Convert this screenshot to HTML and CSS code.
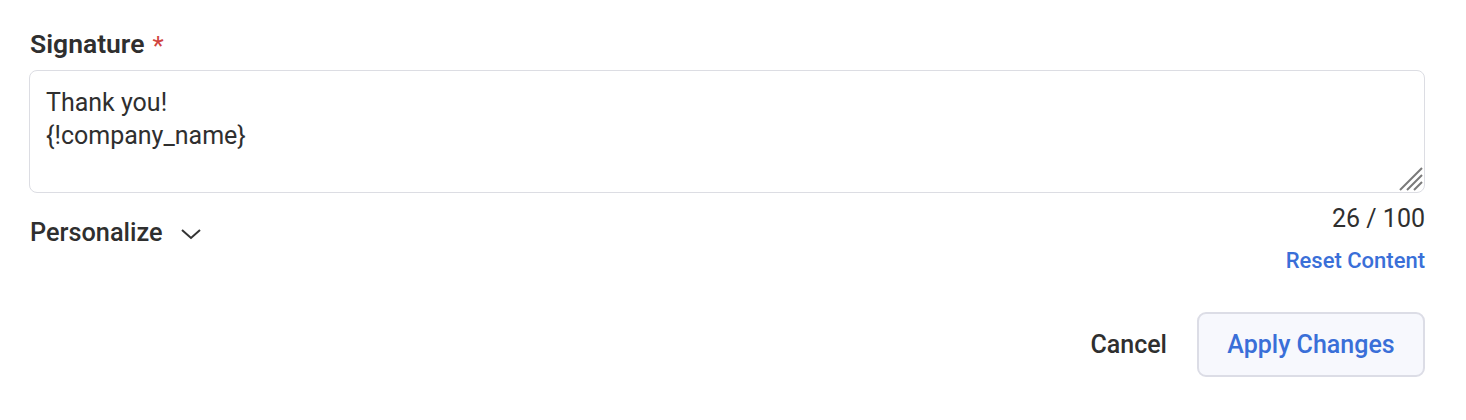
FILE: index.html
```html
<!DOCTYPE html>
<html>
<head>
<meta charset="utf-8">
<link rel="stylesheet" href="styles.css">
</head>
<body>
<div class="form">
  <div class="label">Signature <span class="req">*</span></div>
  <div class="textarea-wrap">
    <div class="textarea">Thank you!<br>{!company_name}</div>
    <svg class="grip" width="26" height="26" viewBox="0 0 26 26">
      <path d="M25 3 L3 25 M25 10 L10 25 M25 17 L17 25" stroke="#7a7a7a" stroke-width="2" fill="none"/>
    </svg>
  </div>
  <div class="below">
    <div class="personalize">
      <span>Personalize</span>
      <svg class="chev" width="22" height="14" viewBox="0 0 22 14">
        <path d="M2 3 L11 11 L20 3" stroke="#333" stroke-width="2" fill="none"/>
      </svg>
    </div>
    <div class="meta">
      <div class="count">26 / 100</div>
      <a class="reset">Reset Content</a>
    </div>
  </div>
  <div class="actions">
    <button class="cancel">Cancel</button>
    <button class="apply">Apply Changes</button>
  </div>
</div>
</body>
</html>
```
FILE: styles.css
```css
html, body { margin: 0; padding: 0; background: #fff; }
body { font-family: Roboto, "Liberation Sans", sans-serif; color: #2f2f2f; }
.form { width: 1396px; margin-left: 29px; padding-top: 27px; }
.label { display: flex; align-items: center; gap: 8px; height: 32px; font-size: 26.5px; font-weight: 600; padding-left: 1px; color: #2f2f2f; }
.req { color: #d0453f; font-weight: 400; font-size: 26px; line-height: 1; margin-top: 6px; }
.textarea-wrap { position: relative; margin-top: 11px; }
.textarea { box-sizing: border-box; height: 123px; border: 1px solid #dcdde3; border-radius: 8px; padding: 15px 16px; font-size: 25px; line-height: 33px; color: #2f2f2f; }
.grip { position: absolute; right: 2px; bottom: 2px; }
.below { display: flex; justify-content: space-between; align-items: flex-start; }
.personalize { display: flex; align-items: center; gap: 17px; padding-left: 1px; margin-top: 24px; font-size: 25.3px; font-weight: 500; color: #2f2f2f; line-height: 32px; }
.chev { margin-top: 2px; }
.meta { display: flex; flex-direction: column; align-items: flex-end; }
.count { font-size: 25px; line-height: 30px; margin-top: 11px; color: #2f2f2f; }
.reset { font-size: 22px; font-weight: 500; color: #3a6fd8; line-height: 26px; margin-top: 14px; }
.actions { display: flex; justify-content: flex-end; align-items: center; gap: 30px; margin-top: 38px; }
button { font-family: inherit; font-size: 25px; font-weight: 500; }
.cancel { background: none; border: none; padding: 0; color: #2f2f2f; }
.apply { box-sizing: border-box; width: 228px; height: 65px; background: #f7f8fd; border: 2px solid #dcdde6; border-radius: 9px; color: #3a6fd8; }
```
